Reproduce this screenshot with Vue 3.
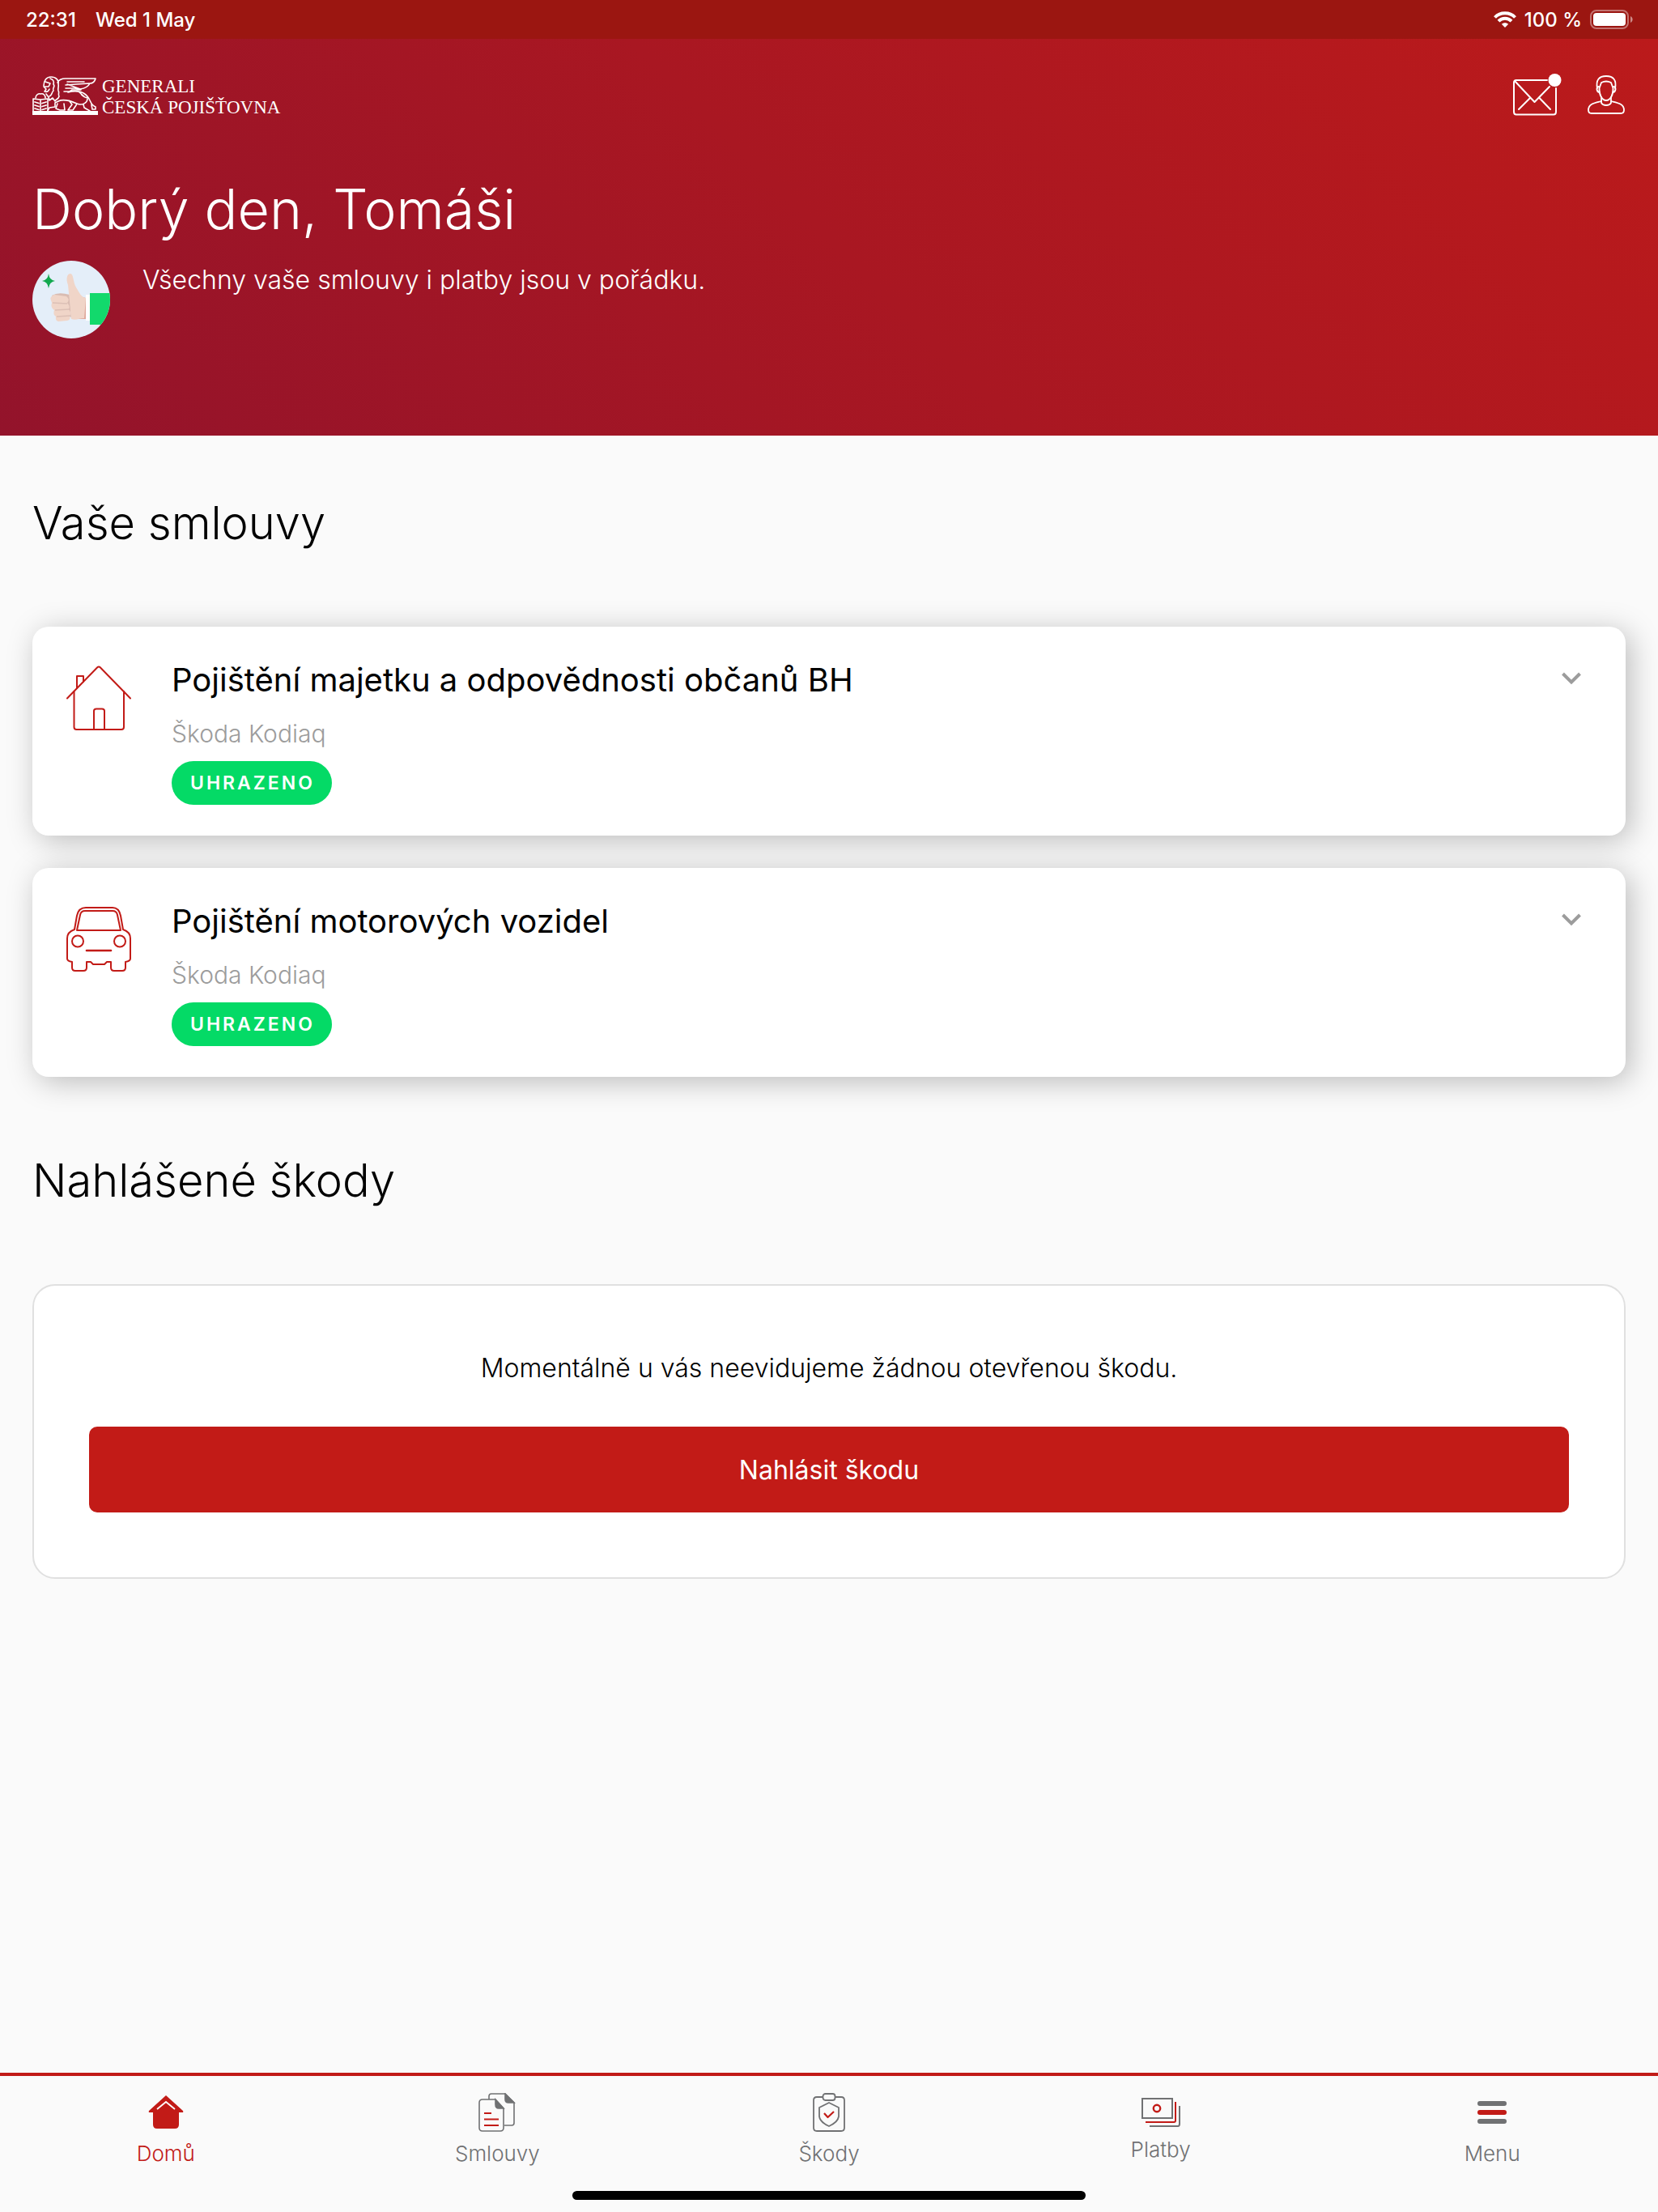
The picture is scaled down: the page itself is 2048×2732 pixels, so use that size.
<script setup>
import { ref } from 'vue';

const contracts = [
    {id: 1, type: "house", title: "Pojištění majetku a odpovědnosti občanů BH", subject: "Škoda Kodiaq", state: "UHRAZENO"},
    {id: 2, type: "car", title: "Pojištění motorových vozidel", subject: "Škoda Kodiaq", state: "UHRAZENO"},
]

const tabs = [
    {id: "home", label: "Domů"},
    {id: "contracts", label: "Smlouvy"},
    {id: "claims", label: "Škody"},
    {id: "payments", label: "Platby"},
    {id: "menu", label: "Menu"},
]

const activeTab = ref("home");
</script>

<template>
    <div class="app_page">
        <div class="status_bar">
            <div class="status_group status_left">
                <span>22:31</span>
                <span>Wed 1 May</span>
            </div>
            <div class="status_group">
                <svg class="wifi" viewBox="0 0 28 20" fill="none" stroke="#fff" stroke-width="4">
                    <path d="M1.500 7.500C8 0.500 20 0.500 26.500 7.500" />
                    <path d="M6 12.200C10.500 7.500 17.500 7.500 22 12.200" />
                    <path d="M14 20L9.800 15.800C12 13.600 16 13.600 18.200 15.800Z" fill="#fff" stroke="none" />
                </svg>
                <span>100 %</span>
                <svg class="battery" viewBox="0 0 54 24">
                    <rect x="1" y="1" width="46" height="22" rx="7" fill="none" stroke="#fff" stroke-opacity=".4" stroke-width="2" />
                    <rect x="4" y="4" width="40" height="16" rx="4" fill="#fff" />
                    <path d="M50 8C53.500 9.500 53.500 14.500 50 16Z" fill="#fff" fill-opacity=".5" />
                </svg>
            </div>
        </div>

        <header class="hero">
            <div class="hero_top">
                <a href="#" class="brand">
                    <svg class="lion" viewBox="0 0 82 50" fill="none" stroke="#fff" stroke-width="1.600" stroke-linejoin="round" stroke-linecap="round">
                        <rect x="0" y="43" width="81" height="5" fill="#fff" stroke="none" />
                        <path d="M1 43V28L10 29L19 28V43M10 29V43" />
                        <path d="M3 32L8 33.500M12 33.500L17 32M3 36L8 37.500M12 37.500L17 36M3 40L8 41.500M12 41.500L17 40" stroke-width="1.800" />
                        <path d="M4 27C4 23 8 21 10 22C14 21 16 24 16 27" />
                        <path d="M14 12C14 6 17 1 23 1C29 1 33 5 32 10C33 13 31 15 32 18C34 21 31 22 33 25C32 29 29 28 28 31L25 27L21 30L20 26L17 22" />
                        <path d="M16 7L22 9L20 13H14L17 16L15 19C18 20 20 19 21 16M22 3C26 4 27 7 26 10C29 13 24 15 26 18C23 21 25 23 21 25" />
                        <path d="M31 8C33 4 36 3 41 3H78C77 7 74 9 71 9M43 7H64M41 11L54 10L71 9C69 13 66 15 59 16L43 10M41 15H52L59 16M39 19H46L49 17H60" />
                        <path d="M44 20C54 17 63 19 68 25C73 31 71 35 78 38V41H74M58 20L65 26L69 27M59 20C61 25 66 27 69 27M73 35L74 41" />
                        <path d="M19 43L21 39L28 38V33L32 31C38 28 46 30 55 34C63 37 68 32 68 28M45 30L49 35L44 42H50L54 36L55 34M31 34L29 40L34 42H40L39 34M63 35L64 39L71 43" />
                    </svg>
                    <span class="brand_name">
                        <span>GENERALI</span>
                        <span>ČESKÁ POJIŠŤOVNA</span>
                    </span>
                </a>
                <div class="hero_actions">
                    <button type="button" class="icon_button" aria-label="Zprávy">
                        <svg class="mail" viewBox="0 0 62 54" fill="none" stroke="#fff" stroke-width="2" stroke-linejoin="round" stroke-linecap="round">
                            <path d="M43 10H5Q2 10 2 13V49Q2 52.500 5 52.500H51Q54 52.500 54 49V20" />
                            <path d="M3 11L27.500 37L46 18M22 32L8 46M33.500 32L47 46" />
                            <circle cx="52.500" cy="10" r="8" fill="#fff" stroke="none" />
                        </svg>
                    </button>
                    <button type="button" class="icon_button" aria-label="Profil">
                        <svg class="person" viewBox="0 0 48 50" fill="none" stroke="#fff" stroke-width="1.800" stroke-linejoin="round" stroke-linecap="round">
                            <path d="M13 17C11 7 15 2 24 2C33 2 37 7 35 17" />
                            <path d="M15.500 17L18 10C22 8 26 8 30 10L32.500 17C33 25 29 32 24 32C19 32 15 25 15.500 17Z" />
                            <path d="M15 15C11 15 12 22 16 22M33 15C37 15 36 22 32 22" />
                            <path d="M18 28V35C20 39 28 39 30 35V28" />
                            <path d="M18 33C10 35 2 36 2 44Q2 48 6 48H42Q46 48 46 44C46 36 38 35 30 33" />
                        </svg>
                    </button>
                </div>
            </div>
            <h1>Dobrý den, Tomáši</h1>
            <div class="hero_state">
                <svg class="thumb" viewBox="0 0 96 96">
                    <clipPath id="thumbClip"><circle cx="48" cy="48" r="48" /></clipPath>
                    <g clip-path="url(#thumbClip)">
                        <rect width="96" height="96" fill="#e4eef9" />
                        <path d="M20 16Q21 24 28 25Q21 26 20 34Q19 26 12 25Q19 24 20 16Z" fill="#12a94f" />
                        <path d="M24 43Q32 38 46 42L48 70L30 60Z" fill="#d9bcb2" />
                        <path d="M50 28C52 36 56 44 66 46V72H56Z" fill="#dfa99c" />
                        <path d="M44 30C41 22 43 16 47 16C51 16 50 26 54 33C58 39 60 45 66 46L64 71C58 71 54 74 48 72L46 50Z" fill="#f0d5c8" />
                        <path d="M27 42L42 44Q47 48 43 52Q47 56 45 60Q49 65 46 68Q48 73 43 74L32 75Q28 74 29 69Q25 66 27 61Q22 58 24 52Q20 44 27 42Z" fill="#f0d5c8" />
                        <path d="M25 52L43 53M28 61L46 60M30 69L46 68" fill="none" stroke="#dcc0b6" stroke-width="1.500" />
                        <rect x="66" y="42" width="6" height="32" fill="#fff" />
                        <rect x="71" y="40" width="25" height="39" fill="#12d96c" />
                    </g>
                </svg>
                <p>Všechny vaše smlouvy i platby jsou v pořádku.</p>
            </div>
        </header>

        <main class="content">
            <section>
                <h2>Vaše smlouvy</h2>
                <div class="contract_list">
                    <article v-for="item in contracts" :key="item.id" class="contract">
                        <svg v-if="item.type == 'house'" class="contract_icon" viewBox="0 0 80 80" fill="none" stroke="#c21b17" stroke-width="2" stroke-linejoin="round" stroke-linecap="round">
                            <path d="M1 40.500L38 2.500Q40 .500 42 2.500L79 40.500" />
                            <path d="M9.500 32V76Q9.500 79 12.500 79H68Q71 79 71 76V32" />
                            <path d="M13 28V13H21V20M34 79V56Q34 53.500 37 53.500H44Q47 53.500 47 56V79" />
                        </svg>
                        <svg v-else class="contract_icon" viewBox="0 0 80 80" fill="none" stroke="#c21b17" stroke-width="2" stroke-linejoin="round" stroke-linecap="round">
                            <path d="M10 28L13 11Q15 1 24 1H57Q65 1 67 11L70 28Q79 31 79 39V64Q79 67 73 68V75Q73 79 69 79H59Q55 79 55 75V68H50L47 71H33L30 68H25V75Q25 79 21 79H11Q7 79 7 75V68Q1 67 1 64V39Q1 31 10 28Z" />
                            <path d="M13 29L17 10Q18 5 23 5H57Q62 5 63 10L67 29Z" />
                            <circle cx="14" cy="42.500" r="7" />
                            <circle cx="66" cy="42.500" r="7" />
                            <path d="M25 54H55" stroke-width="2.600" />
                        </svg>
                        <div class="contract_text">
                            <h3>{{ item.title }}</h3>
                            <span class="subject">{{ item.subject }}</span>
                            <span class="badge">{{ item.state }}</span>
                        </div>
                        <button type="button" class="icon_button" :aria-label="'Rozbalit ' + item.title">
                            <svg class="chevron" viewBox="0 0 24 16" fill="none" stroke="#9c9c9c" stroke-width="4">
                                <path d="M1.500 2L12 12.500L22.500 2" />
                            </svg>
                        </button>
                    </article>
                </div>
            </section>

            <section>
                <h2>Nahlášené škody</h2>
                <div class="claims_empty">
                    <p>Momentálně u vás neevidujeme žádnou otevřenou škodu.</p>
                    <button type="button" class="claim_button">Nahlásit škodu</button>
                </div>
            </section>
        </main>

        <nav class="tab_bar">
            <div class="tabs">
                <a v-for="tab in tabs" :key="tab.id" href="#" class="tab" :class="{ active: tab.id == activeTab }" @click.prevent="activeTab = tab.id">
                    <svg v-if="tab.id == 'home'" class="tab_icon" viewBox="0 0 48 48">
                        <path d="M24 3L45 22Q46 24 44 24H40V39Q40 44 35 44H13Q8 44 8 39V24H4Q2 24 3 22Z" fill="#c21b17" />
                        <path d="M13 20L24 11L35 20" fill="none" stroke="#fff" stroke-width="1.800" />
                    </svg>
                    <svg v-else-if="tab.id == 'contracts'" class="tab_icon" viewBox="0 0 48 48" fill="none" stroke="#707173" stroke-width="1.600">
                        <path d="M14 8V4Q14 1 17 1H34L45 12V37Q45 40 42 40H33" />
                        <path d="M34 1V8Q34 12 38 12H45Z" fill="#707173" />
                        <path d="M2 12Q2 8 6 8H22L32 19V43Q32 47 28 47H6Q2 47 2 43Z" />
                        <path d="M22 8V14Q22 19 26 19H32Z" fill="#707173" />
                        <path d="M8 25H17M8 32.500H26M8 40H26" stroke="#c21b17" stroke-width="2" />
                    </svg>
                    <svg v-else-if="tab.id == 'claims'" class="tab_icon" viewBox="0 0 48 48" fill="none" stroke="#707173" stroke-width="1.800" stroke-linejoin="round">
                        <path d="M16 5H9Q5 5 5 9V43Q5 47 9 47H39Q43 47 43 43V9Q43 5 39 5H32" />
                        <rect x="16.500" y="1" width="15" height="8" rx="3" />
                        <path d="M24 12L36 18V29Q35 36 24 41Q13 36 12 29V18Z" />
                        <path d="M18 25L22.500 30L30 23" stroke="#c21b17" stroke-width="2.200" />
                    </svg>
                    <svg v-else-if="tab.id == 'payments'" class="tab_icon payments" viewBox="0 0 48 38" fill="none" stroke="#707173" stroke-width="2">
                        <rect x="1" y="2" width="37" height="24" stroke-width="2" />
                        <path d="M5 31H40Q42 31 42 29V6" stroke="#c21b17" />
                        <path d="M10 36H45Q47 36 47 33V11" />
                        <circle cx="19" cy="14" r="4.200" stroke="#c21b17" stroke-width="2.400" />
                    </svg>
                    <svg v-else class="tab_icon" viewBox="0 0 48 48" stroke-width="6" stroke-linecap="round">
                        <path d="M9 13H39M9 35H39" stroke="#707173" />
                        <path d="M9 24H39" stroke="#c21b17" />
                    </svg>
                    <span>{{ tab.label }}</span>
                </a>
            </div>
            <div class="home_indicator"></div>
        </nav>
    </div>
</template>

<style>
body {
    background: #fafafa;
}
</style>

<style scoped>
.app_page {
    display: flex;
    flex-direction: column;
    min-height: 100vh;
    font-family: Inter, "Liberation Sans", sans-serif;
    font-weight: 300;
    color: #000;
}

h1, h2, h3, p {
    margin: 0;
}

svg {
    display: block;
    flex-shrink: 0;
}

a {
    color: inherit;
    text-decoration: none;
}

.icon_button {
    padding: 0;
    border: 0;
    background: none;
    cursor: pointer;
}

.status_bar {
    display: flex;
    align-items: center;
    justify-content: space-between;
    height: 48px;
    padding: 0 30px 0 32px;
    background: #9b1611;
    color: #fff;
    font-size: 24px;
    font-weight: 500;
}

.status_group {
    display: flex;
    align-items: center;
    gap: 10px;
}

.status_left {
    gap: 24px;
}

.wifi {
    width: 28px;
    height: 20px;
}

.battery {
    width: 54px;
    height: 24px;
}

.hero {
    box-sizing: border-box;
    min-height: 490px;
    padding: 40px 40px 120px;
    background: linear-gradient(45deg, #93132b, #a91722 50%, #bb1a1b);
    color: #fff;
}

.hero_top {
    display: flex;
    justify-content: space-between;
    align-items: flex-start;
    height: 56px;
}

.brand {
    display: flex;
    gap: 4px;
    padding-top: 6px;
}

.lion {
    width: 82px;
    height: 50px;
}

.brand_name {
    display: flex;
    flex-direction: column;
    font-family: "Liberation Serif", serif;
    font-size: 23px;
    font-weight: 400;
    line-height: 26px;
}

.hero_actions {
    display: flex;
    align-items: flex-start;
    gap: 30px;
}

.mail {
    width: 62px;
    height: 56px;
}

.person {
    width: 48px;
    height: 58px;
}

h1 {
    margin-top: 70px;
    font-size: 68px;
    font-weight: 300;
    line-height: 88px;
}

.hero_state {
    display: flex;
    gap: 40px;
    margin-top: 20px;
}

.thumb {
    width: 96px;
    height: 96px;
}

.hero_state p {
    padding-top: 4px;
    font-size: 32px;
    line-height: 40px;
}

.content {
    display: flex;
    flex-direction: column;
    flex: 1;
    gap: 88px;
    padding: 68px 40px;
}

h2 {
    margin-bottom: 88px;
    font-size: 56px;
    font-weight: 300;
    line-height: 80px;
}

.contract_list {
    display: flex;
    flex-direction: column;
    gap: 40px;
}

.contract {
    display: flex;
    align-items: flex-start;
    gap: 50px;
    padding: 38px 55px 38px 42px;
    border-radius: 20px;
    background: #fff;
    box-shadow: 6px 6px 36px rgba(0, 0, 0, .25);
}

.contract_icon {
    width: 80px;
    height: 80px;
    padding-top: 10px;
}

.contract_text {
    display: flex;
    flex-direction: column;
    align-items: flex-start;
    flex: 1;
}

h3 {
    font-size: 40px;
    font-weight: 400;
    line-height: 56px;
}

.subject {
    margin-top: 18px;
    color: #9c9c9c;
    font-size: 30px;
    line-height: 40px;
}

.badge {
    margin-top: 14px;
    padding: 0 21px 0 23px;
    border-radius: 27px;
    background: #04da66;
    color: #fff;
    font-size: 23px;
    font-weight: 600;
    letter-spacing: 3px;
    line-height: 54px;
}

.chevron {
    width: 24px;
    height: 16px;
    margin-top: 18px;
}

.claims_empty {
    display: flex;
    flex-direction: column;
    gap: 52px;
    padding: 82px 68px 80px;
    border: 2px solid #e0e0e0;
    border-radius: 28px;
    background: #fff;
    text-align: center;
}

.claims_empty p {
    font-size: 32px;
    line-height: 40px;
}

.claim_button {
    height: 106px;
    border: 0;
    border-radius: 10px;
    background: #c21b17;
    color: #fff;
    font-family: inherit;
    font-size: 32px;
    font-weight: 400;
    cursor: pointer;
}

.tab_bar {
    border-top: 4px solid #c21b17;
    padding-bottom: 15px;
}

.tabs {
    display: grid;
    grid-template-columns: repeat(5, 1fr);
    height: 142px;
}

.tab {
    display: flex;
    flex-direction: column;
    align-items: center;
    gap: 11px;
    padding-top: 21px;
    color: #707173;
    font-size: 26px;
    line-height: 32px;
}

.tab.active {
    color: #c21b17;
}

.tab_icon {
    width: 48px;
    height: 48px;
}

.payments {
    height: 38px;
    padding-top: 5px;
}

.home_indicator {
    width: 31%;
    height: 11px;
    margin: 0 auto;
    border-radius: 6px;
    background: #000;
}
</style>
